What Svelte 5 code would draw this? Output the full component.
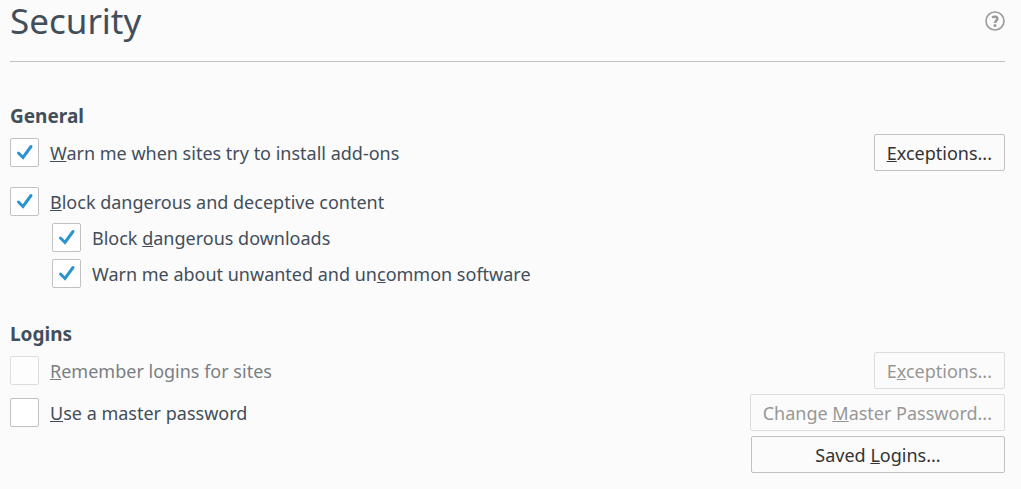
<script>
    let general = $state({ addons: true, deceptive: true, downloads: true, uncommon: true });
    let logins = $state({ remember: false, master: false });
</script>

<main>
    <header>
        <h1>Security</h1>
        <button class="help" aria-label="Help">
            <svg width="20" height="20" viewBox="0 0 20 20">
                <circle cx="10" cy="10" r="9" fill="none" stroke="#999" stroke-width="1.6" />
                <path d="M7.2 6.6c1.6-1.3 5.2-1.3 5.2 1.2 0 1.9-2.4 1.9-2.4 4.2" fill="none" stroke="#999" stroke-width="2.4" />
                <circle cx="10" cy="14.6" r="1.5" fill="#999" />
            </svg>
        </button>
    </header>

    <section>
        <h2>General</h2>
        <div class="row">
            <label>
                <input type="checkbox" bind:checked={general.addons} />
                <span><u>W</u>arn me when sites try to install add-ons</span>
            </label>
            <button class="action"><u>E</u>xceptions...</button>
        </div>
        <div class="group">
            <label>
                <input type="checkbox" bind:checked={general.deceptive} />
                <span><u>B</u>lock dangerous and deceptive content</span>
            </label>
            <div class="nested">
                <label>
                    <input type="checkbox" bind:checked={general.downloads} />
                    <span>Block <u>d</u>angerous downloads</span>
                </label>
                <label>
                    <input type="checkbox" bind:checked={general.uncommon} />
                    <span>Warn me about unwanted and un<u>c</u>ommon software</span>
                </label>
            </div>
        </div>
    </section>

    <section>
        <h2>Logins</h2>
        <div class="rows">
            <div class="row">
                <label class="disabled">
                    <input type="checkbox" bind:checked={logins.remember} disabled />
                    <span><u>R</u>emember logins for sites</span>
                </label>
                <button class="action" disabled>E<u>x</u>ceptions...</button>
            </div>
            <div class="row">
                <label>
                    <input type="checkbox" bind:checked={logins.master} />
                    <span><u>U</u>se a master password</span>
                </label>
                <button class="action wide" disabled>Change <u>M</u>aster Password...</button>
            </div>
            <div class="row end">
                <button class="action wide">Saved <u>L</u>ogins...</button>
            </div>
        </div>
    </section>
</main>

<style>
    :global(body) {
        background: #fbfbfb;
    }
    main {
        padding: 0 16px 15px 10px;
        font-family: "Noto Sans", "Open Sans", sans-serif;
        font-size: 18px;
        line-height: 24px;
        color: #424e5a;
    }
    header {
        display: flex;
        justify-content: space-between;
        align-items: center;
        height: 62px;
        padding-bottom: 20px;
        box-sizing: border-box;
        border-bottom: 1px solid #c1c1c1;
    }
    h1 {
        margin: 0;
        font-size: 35px;
        line-height: 40px;
        font-weight: 400;
    }
    h2 {
        margin: 0 0 6px;
        font-size: 19px;
        line-height: 24px;
        font-weight: 700;
    }
    section {
        padding-top: 42px;
    }
    section + section {
        padding-top: 34px;
    }
    .row {
        display: flex;
        justify-content: space-between;
        align-items: center;
    }
    .end {
        justify-content: flex-end;
    }
    .rows {
        display: grid;
        gap: 5px;
    }
    label {
        display: flex;
        align-items: center;
        gap: 11px;
    }
    .group {
        margin-top: 16px;
    }
    .nested {
        display: grid;
        gap: 7px;
        margin: 7px 0 0 42px;
    }
    input {
        appearance: none;
        width: 29px;
        height: 29px;
        margin: 0;
        box-sizing: border-box;
        border: 1px solid #c1c1c1;
        border-radius: 2px;
        background: #fff;
    }
    input:checked {
        background: #fff url("data:image/svg+xml,%3Csvg xmlns='http://www.w3.org/2000/svg' viewBox='0 0 27 27'%3E%3Cpath d='M7.5 14l4.5 4.5 8-11' fill='none' stroke='%232a93d0' stroke-width='3' stroke-linecap='round'/%3E%3C/svg%3E") center no-repeat;
    }
    button {
        font: inherit;
    }
    .help {
        display: flex;
        padding: 0;
        border: 0;
        background: none;
    }
    .action {
        height: 37px;
        padding: 0 12px;
        border: 1px solid #c1c1c1;
        border-radius: 2px;
        background: #fbfbfb;
        color: #333;
    }
    .wide {
        min-width: 254px;
    }
    .disabled {
        color: #7a7f83;
    }
    .disabled input,
    .action:disabled {
        opacity: 0.5;
    }
</style>
